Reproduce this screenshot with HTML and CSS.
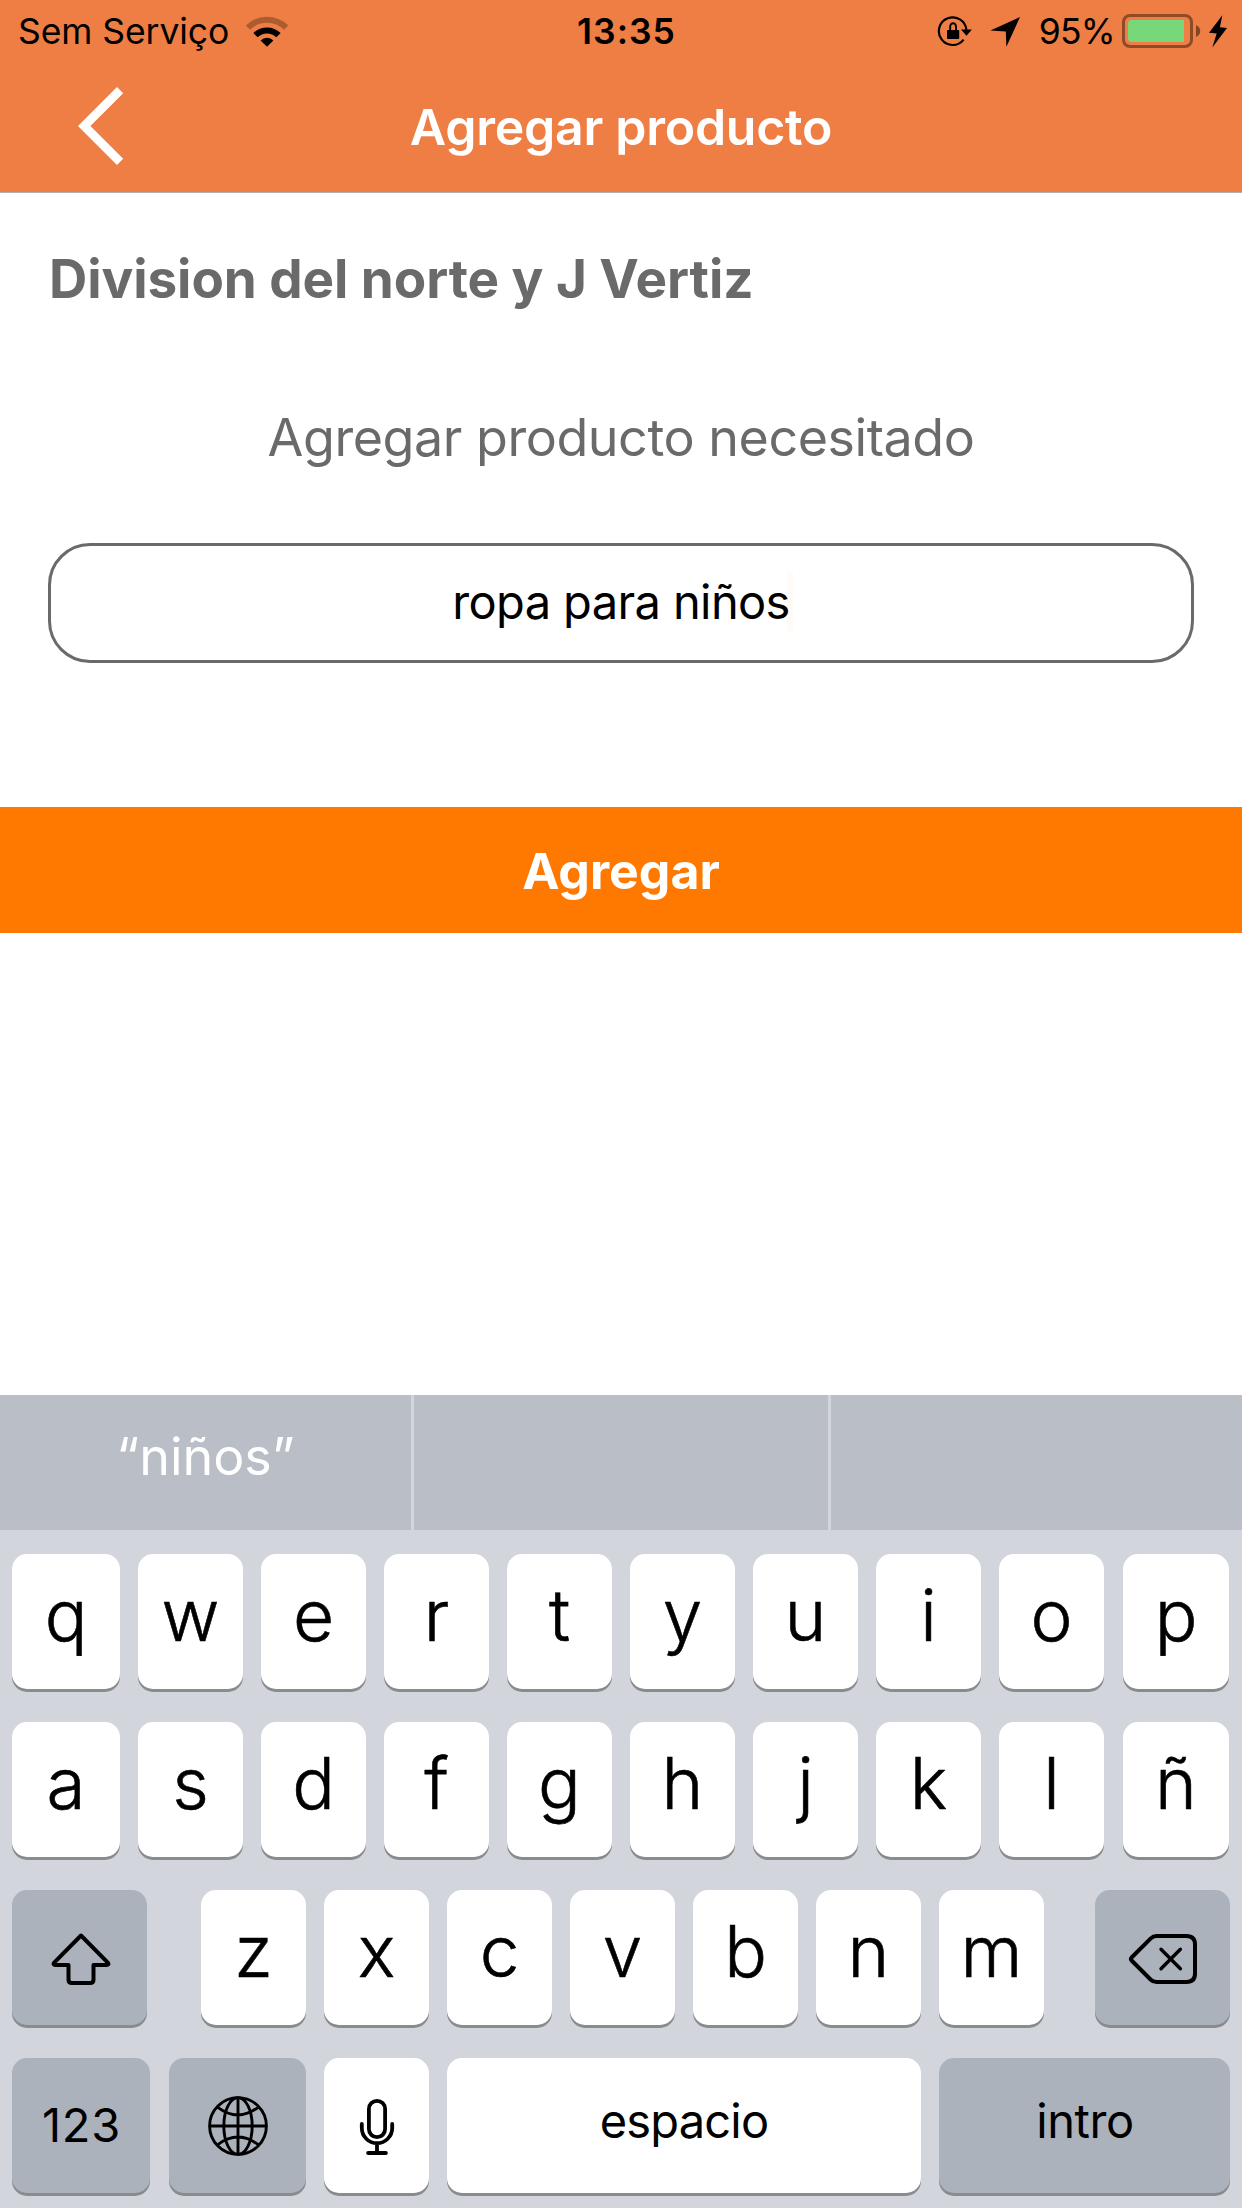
FILE: index.html
```html
<!DOCTYPE html>
<html lang="es">
<head>
<meta charset="utf-8">
<title>Agregar producto</title>
<link rel="stylesheet" href="styles.css">
</head>
<body>
<header class="header">
  <div class="status">
    <div class="status-left">
      <span class="carrier">Sem Serviço</span>
      <svg class="wifi" width="42" height="31" viewBox="246 14 42 31" fill="none" stroke="#000">
        <path d="M247.9 25.7A27 27 0 0 1 286.1 25.7" stroke-width="6" opacity=".27"/>
        <path d="M255.5 33.2A16.2 16.2 0 0 1 278.5 33.2" stroke-width="6"/>
        <path d="M267 44.8L260.6 38.4A9.2 9.2 0 0 1 273.4 38.4Z" fill="#000" stroke="none"/>
      </svg>
    </div>
    <span class="time">13:35</span>
    <div class="status-right">
      <svg class="lock" width="36" height="32" viewBox="937 14 36 32">
        <path d="M966.4 28.8A13.8 13.8 0 1 0 963.6 38.6" fill="none" stroke="#000" stroke-width="2.2"/>
        <path d="M961 28.6L971.9 28.6L966.5 34.8Z"/>
        <path d="M950.2 30V25.6A2.9 3.4 0 0 1 956 25.6V30" fill="none" stroke="#000" stroke-width="1.9"/>
        <rect x="947" y="29" width="12.2" height="9" rx="1"/>
      </svg>
      <svg class="location" width="30" height="31" viewBox="990 15 30 31"><path d="M1020 16L1006.4 45.8L1005.8 30.4L990.4 29.6Z"/></svg>
      <span class="percent">95%</span>
      <svg class="battery" width="79" height="34" viewBox="1122 13 79 34">
        <rect x="1123.5" y="14.5" width="68" height="31" rx="6.5" fill="none" stroke="#000" stroke-opacity=".4" stroke-width="3"/>
        <path d="M1184 19V41H1132Q1128 41 1128 37V23Q1128 19 1132 19Z" fill="#78d778"/>
        <path d="M1196 24Q1200.2 26 1200.2 30T1196 36Z" opacity=".45"/>
      </svg>
      <svg class="bolt" width="18" height="33" viewBox="1209 14 18 33"><path d="M1222.3 14.3L1209 31.8L1216.7 32.6L1212.3 46.5L1227 27L1219.9 26.3Z"/></svg>
    </div>
  </div>
  <nav class="nav">
    <svg class="back" width="46" height="78" viewBox="78 87 46 78"><path d="M117 87L123.2 93.2L90.4 126L123.2 158.8L117 165L78 126Z" fill="#fff"/></svg>
    <h1 class="title">Agregar producto</h1>
  </nav>
</header>
<main class="content">
  <h2 class="place">Division del norte y J Vertiz</h2>
  <p class="prompt">Agregar producto necesitado</p>
  <div class="field"><span class="field-text">ropa para niños</span><i class="caret"></i></div>
  <button class="submit">Agregar</button>
</main>
<section class="keyboard">
  <div class="suggestions">
    <div class="suggestion">“niños”</div>
    <div class="suggestion"></div>
    <div class="suggestion"></div>
  </div>
  <div class="rows">
    <div class="row letters">
      <b class="key">q</b><b class="key">w</b><b class="key">e</b><b class="key">r</b><b class="key">t</b><b class="key">y</b><b class="key">u</b><b class="key">i</b><b class="key">o</b><b class="key">p</b>
    </div>
    <div class="row letters">
      <b class="key">a</b><b class="key">s</b><b class="key">d</b><b class="key">f</b><b class="key">g</b><b class="key">h</b><b class="key">j</b><b class="key">k</b><b class="key">l</b><b class="key">ñ</b>
    </div>
    <div class="row lower">
      <b class="key dark shift"><svg width="60" height="52" viewBox="51.5 1933 60 52" fill="none" stroke="#000" stroke-width="4" stroke-linejoin="round"><path d="M81.5 1935.5L54.7 1962.6Q53 1965 56 1965H69V1979.5Q69 1983 72.5 1983H90.5Q94 1983 94 1979.5V1965H107Q110 1965 108.3 1962.6Z"/></svg></b>
      <div class="letters-group"><b class="key">z</b><b class="key">x</b><b class="key">c</b><b class="key">v</b><b class="key">b</b><b class="key">n</b><b class="key">m</b></div>
      <b class="key dark delete"><svg width="70" height="52" viewBox="1128 1933 70 52" fill="none" stroke="#000" stroke-width="4" stroke-linejoin="round" stroke-linecap="round"><path d="M1131.6 1957.5L1150.8 1938.3Q1153.2 1936 1156.5 1936H1186.5Q1195 1936 1195 1944.5V1973.5Q1195 1982 1186.5 1982H1156.5Q1153.2 1982 1150.8 1979.7L1131.6 1960.5Q1130.2 1959 1131.6 1957.5Z"/><path d="M1161 1949.3L1180.4 1968.7M1180.4 1949.3L1161 1968.7" stroke-width="3.4"/></svg></b>
    </div>
    <div class="row bottom">
      <b class="key dark word numbers">123</b>
      <b class="key dark globe"><svg width="60" height="60" viewBox="0 0 60 60" fill="none" stroke="#000" stroke-width="2.9"><circle cx="30" cy="30" r="28.4"/><ellipse cx="30" cy="30" rx="14.2" ry="28.4"/><path d="M30 1V59M1 30H59M9.8 11.3Q30 26.5 50.2 11.3M9.8 48.7Q30 33.5 50.2 48.7"/></svg></b>
      <b class="key mic"><svg width="36" height="58" viewBox="359.5 2098 36 58" fill="none" stroke="#000" stroke-width="3.8" stroke-linecap="round"><rect x="369.4" y="2100.8" width="16.2" height="36.4" rx="8.1"/><path d="M362.3 2124V2128A15.2 15.2 0 0 0 392.7 2128V2124M377.5 2144V2153M368.6 2153H386.4"/></svg></b>
      <b class="key word space">espacio</b>
      <b class="key dark word enter">intro</b>
    </div>
  </div>
</section>
</body>
</html>
```
FILE: styles.css
```css
* { box-sizing: border-box; }
body {
  margin: 0;
  width: 1242px;
  height: 2208px;
  display: flex;
  flex-direction: column;
  background: #fff;
  color: #000;
  font-family: Inter, "Liberation Sans", sans-serif;
  overflow: hidden;
}
svg { display: block; flex: none; }
h1, h2, p { margin: 0; }

/* Status bar and navigation */
.header { height: 193px; background: #ee7e43; border-bottom: 1px solid #b2b2b2; flex: none; }
.status {
  height: 60px;
  display: grid;
  grid-template-columns: 1fr auto 1fr;
  align-items: center;
  padding: 0 15px 0 18px;
  font-size: 35.5px;
  line-height: 60px;
}
.status span { padding-top: 2px; }
.status-left, .status-right { display: flex; align-items: center; }
.status-right { justify-content: flex-end; }
.status .time { font-weight: 600; letter-spacing: 1px; padding-left: 8px; }
.carrier { letter-spacing: -0.08px; }
.wifi { margin-left: 17px; }
.location { margin-left: 17px; margin-top: 1px; }
.percent { margin: 0 7px 0 19px; letter-spacing: -0.7px; }
.bolt { margin-left: 8px; }
.nav {
  height: 132px;
  display: grid;
  grid-template-columns: 1fr auto 1fr;
  align-items: center;
}
.back { margin-left: 78px; }
.title { color: #fff; font-size: 50px; font-weight: 600; line-height: 60px; letter-spacing: -0.27px; padding-top: 2px; }

/* Form */
.content { flex: 1; display: flex; flex-direction: column; color: #6a6a6a; }
.place { margin: 56px 0 0 49px; font-size: 53px; font-weight: 700; line-height: 60px; letter-spacing: -0.07px; }
.prompt { margin-top: 99px; font-size: 52px; line-height: 60px; letter-spacing: -0.45px; text-align: center; }
.field {
  position: relative;
  z-index: 0;
  margin: 75px 48px 0;
  height: 120px;
  border: 3px solid #6a6a6a;
  border-radius: 42px;
  display: flex;
  align-items: center;
  justify-content: center;
  color: #000;
  font-size: 47px;
  line-height: 60px;
  letter-spacing: -0.61px;
}
.field-text { padding-bottom: 2px; }
.caret { z-index: -1; width: 6px; height: 62px; margin: -3px -3px 0 -3px; border-radius: 3px; background: #fffaf5; }
.submit {
  margin-top: 144px;
  padding: 1px 0 0;
  height: 126px;
  border: 0;
  background: #ff7900;
  color: #fff;
  font: 700 50px/60px Inter, "Liberation Sans", sans-serif;
}

/* Keyboard */
.keyboard { height: 813px; flex: none; background: #d2d5db; }
.suggestions { height: 135px; display: grid; grid-template-columns: 411px 414px 411px; gap: 3px; }
.suggestion {
  display: flex;
  align-items: center;
  justify-content: center;
  padding-bottom: 11px;
  background: #babec7;
  color: #fff;
  font-size: 52px;
  line-height: 60px;
}
.rows { padding: 24px 12px 0; display: flex; flex-direction: column; gap: 33px; }
.row { display: grid; height: 135px; column-gap: 18px; }
.letters { grid-template-columns: 108px repeat(8, 105px) 107px; }
.letters .key:last-child { margin-left: 1px; }
.lower { grid-template-columns: 135px 948px 135px; column-gap: 0; }
.letters-group {
  display: grid;
  grid-template-columns: repeat(7, 105px);
  column-gap: 18px;
  padding-left: 54px;
}
.bottom { grid-template-columns: 139px 137px 105px 474px 291px; }
.key {
  display: flex;
  align-items: center;
  justify-content: center;
  padding-bottom: 13px;
  background: #fff;
  border-radius: 15px;
  box-shadow: 0 3px 0 #898b8f;
  font-size: 71px;
  font-weight: 350;
  line-height: 80px;
  -webkit-text-stroke: 0.6px #000;
}
.dark { background: #acb2bc; }
.word { font-size: 47px; font-weight: 400; -webkit-text-stroke: 0; }
.shift { padding: 3px 0 0 3px; }
.delete { padding: 3px 0 0 1px; }
.globe { padding: 1px 0 0; }
.mic { padding: 3px 0 0 1px; }
.numbers { margin-right: 1px; padding: 0 0 1px 1px; letter-spacing: 0.8px; }
.space { padding: 0 0 10px; letter-spacing: -0.8px; }
.enter { padding: 0 0 10px 1px; letter-spacing: -0.45px; }
```
